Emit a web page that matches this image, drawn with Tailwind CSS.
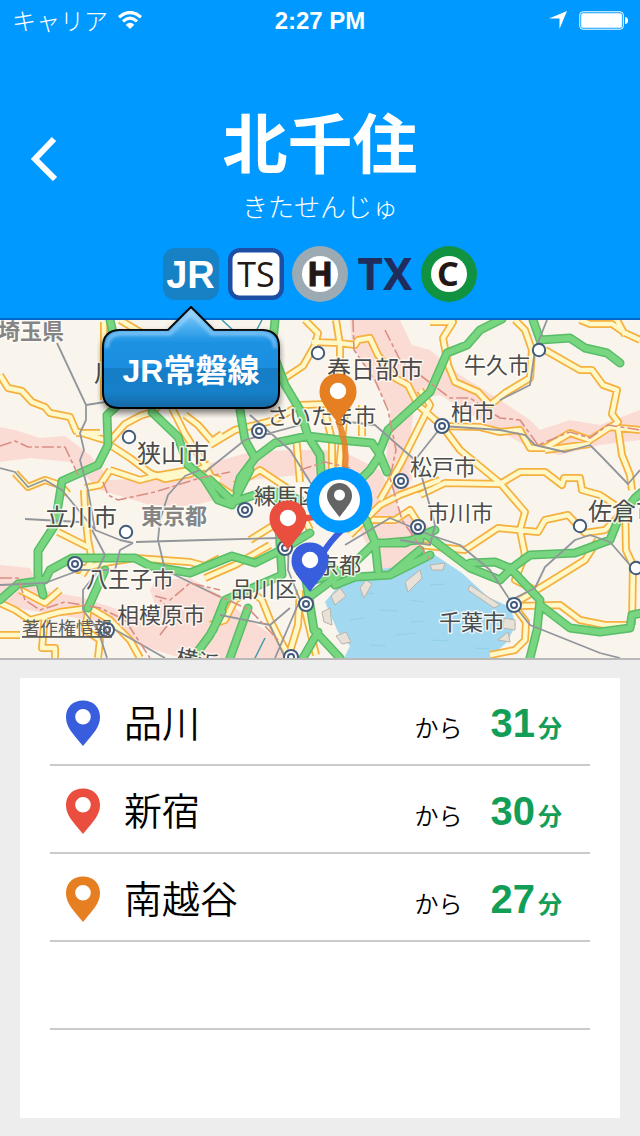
<!DOCTYPE html>
<html lang="ja">
<head>
<meta charset="utf-8">
<meta name="viewport" content="width=device-width, initial-scale=1">
<title>北千住</title>
<script src="https://cdn.jsdelivr.net/npm/@tailwindcss/browser@4"></script>
</head>
<body class="flex min-h-screen flex-col bg-[#ededed] font-['Liberation_Sans','Noto_Sans_CJK_JP',sans-serif] text-black">
<svg class="absolute size-0" aria-hidden="true">
  <defs>
    <path id="pin" fill-rule="evenodd" d="M0 0C-12-14-17-20-17-29C-17-39-10-45.500 0-45.500S17-39 17-29C17-20 12-14 0 0ZM0-37A7.800 7.800 0 1 0 0-21.400A7.800 7.800 0 1 0 0-37Z"/>
    <g id="mappin"><path fill="currentColor" d="M0 0C-12-16-18.500-21-18.500-31.500C-18.500-42-11-49.500 0-49.500S18.500-42 18.500-31.500C18.500-21 12-16 0 0Z"/><circle cy="-32" r="8.200" fill="#fff"/></g>
    <g id="town"><circle r="6.200" fill="#fff" stroke="#435b7b" stroke-width="2"/></g>
    <g id="city"><circle r="7" fill="#fff" stroke="#435b7b" stroke-width="2"/><circle r="3" fill="#fff" stroke="#435b7b" stroke-width="2"/></g>
  </defs>
</svg>

<header class="relative z-10 border-b-2 border-[#0068cc] bg-[#0099ff] text-white">
  <div class="grid h-10 grid-cols-3 items-center px-3 text-2xl">
    <div class="flex items-center gap-2.5">
      <span class="font-['Noto_Sans_CJK_JP',sans-serif] font-light">キャリア</span>
      <svg class="h-[18px] w-6" viewBox="0 0 24 18" fill="none" stroke="#fff" stroke-width="3.200"><path d="M1 6.200Q12-3.200 23 6.200M5 10.400Q12 4 19 10.400"/><path fill="#fff" stroke="none" d="M12 18L7.700 13.700Q12 10 16.300 13.700Z"/></svg>
    </div>
    <div class="pt-0.5 text-center font-bold">2:27 PM</div>
    <div class="flex items-center justify-end gap-3">
      <svg class="size-[18px]" viewBox="0 0 18 18" fill="#fff"><path d="M18 0L10.500 18V7.500H0Z"/></svg>
      <svg class="h-[19px] w-[49px]" viewBox="0 0 49 19" fill="#fff"><rect x=".8" y=".8" width="43.500" height="17.400" rx="3" fill="none" stroke="#fff"/><rect x="2.200" y="2.200" width="40.700" height="14.600" rx="1.500"/><path d="M46 6Q49 6 49 9.500T46 13Z"/></svg>
    </div>
  </div>
  <div class="relative flex flex-col items-center pt-[60px]">
    <button type="button" aria-label="戻る" class="absolute top-[93px] left-[30px]">
      <svg class="h-[48px] w-[30px]" viewBox="0 0 30 48" fill="none" stroke="#fff" stroke-width="6"><path d="M24 6L5 26L25 46" /></svg>
    </button>
    <h1 class="font-['Noto_Sans_CJK_JP',sans-serif] text-[65px] leading-[80px] font-bold">北千住</h1>
    <p class="mt-1.5 font-['Noto_Sans_CJK_JP',sans-serif] text-[26px] leading-[40px] font-light">きたせんじゅ</p>
  </div>
  <nav class="mx-auto mt-5 mb-4 flex w-[314px] items-center justify-between" aria-label="路線">
    <div class="relative">
      <button type="button" aria-label="JR常磐線" class="block">
        <svg class="h-[52px] w-14" viewBox="0 0 56 52"><rect width="56" height="52" rx="12" fill="#1781c5"/><text x="27.500" y="40" text-anchor="middle" font-family="Liberation Sans" font-weight="700" font-size="38" fill="#fff">JR</text></svg>
      </button>
      <div class="absolute top-[58px] left-1/2 h-[112px] w-[188px] -translate-x-1/2 pt-6">
        <svg class="absolute inset-0 size-full" viewBox="0 0 188 112">
          <defs>
            <linearGradient id="bubble" x2="0" y2="1"><stop offset="0" stop-color="#9bd3f8"/><stop offset=".2" stop-color="#4aaef0"/><stop offset=".36" stop-color="#1a91e2"/><stop offset=".6" stop-color="#1c8ee0"/><stop offset=".61" stop-color="#177dc6"/><stop offset=".84" stop-color="#1880ca"/><stop offset="1" stop-color="#1468a4"/></linearGradient>
            <filter id="shade" x="-10%" y="-10%" width="120%" height="130%"><feDropShadow dx="0" dy="4" stdDeviation="3" flood-opacity=".5"/></filter>
            <filter id="soft"><feGaussianBlur stdDeviation="1.500"/></filter>
          </defs>
          <path d="M22 24H71L94 1L117 24H166Q182 25 182 41V86Q182 102 166 102H22Q6 102 6 86V41Q6 25 22 24Z" fill="url(#bubble)" stroke="#000" stroke-width="2" stroke-linejoin="round" filter="url(#shade)"/>
          <path d="M10 42Q10 28 24 27.500H73L94 7L115 27.500H164Q178 28 178 42" fill="none" stroke="#b8dfff" stroke-opacity=".5" stroke-width="4" filter="url(#soft)"/>
        </svg>
        <p class="relative pt-0.5 text-center text-[32px] leading-[78px] font-bold whitespace-nowrap">JR常磐線</p>
      </div>
    </div>
    <button type="button" aria-label="東武スカイツリーライン"><svg class="h-[52px] w-14" viewBox="0 0 56 52"><rect width="56" height="52" rx="12" fill="#1c4fa4"/><rect x="4.500" y="4.500" width="47" height="43" rx="7" fill="#fff"/><text x="28" y="39" text-anchor="middle" font-family="Open Sans, Noto Sans, sans-serif" font-size="34" fill="#231815">TS</text></svg></button>
    <button type="button" aria-label="日比谷線"><svg class="size-14" viewBox="0 0 56 56"><circle cx="28" cy="28" r="28" fill="#9caab3"/><circle cx="28" cy="28" r="18" fill="#fff"/><text x="28" y="40" text-anchor="middle" font-family="Liberation Sans Narrow, Noto Sans, sans-serif" font-weight="700" font-size="34" fill="#231815" stroke="#231815">H</text></svg></button>
    <button type="button" aria-label="つくばエクスプレス"><svg class="size-14 overflow-visible" viewBox="0 0 56 56"><text x="28" y="44" text-anchor="middle" font-family="Noto Sans, Open Sans, sans-serif" font-weight="700" font-size="44" fill="#1f2c5c">TX</text></svg></button>
    <button type="button" aria-label="千代田線"><svg class="size-14" viewBox="0 0 56 56"><circle cx="28" cy="28" r="28" fill="#109241"/><circle cx="28" cy="28" r="18" fill="#fff"/><text x="27" y="40" text-anchor="middle" font-family="Noto Sans, Open Sans, sans-serif" font-weight="700" font-size="34" fill="#231815">C</text></svg></button>
  </nav>
</header>

<main class="flex flex-1 flex-col">
<section aria-label="地図" class="border-b-2 border-[#b9b9b9]">
<svg class="block h-auto w-full" viewBox="0 320 640 338" stroke-linejoin="round">
  <rect y="320" width="640" height="338" fill="#f9f5ed"/>
  <g fill="#fbdcd5">
    <path d="M0 427L15 430L40 438L65 436L90 455L110 480L150 478L190 468L215 462L250 452L290 450L340 450L380 470L400 510L435 530L410 570L385 575L370 550L340 495L300 475L250 480L215 500L190 506L150 505L100 490L70 462L30 458L0 462Z"/>
    <path d="M350 320H400L412 345L430 350L460 375L500 400L530 420L540 430L570 420L600 425L640 410V440L600 445L560 455L530 448L480 420L440 395L415 400L410 440L412 480L400 500L385 475L390 410L370 375L352 345Z"/>
    <path d="M0 565L30 568L40 590L80 597L120 610L160 620L150 590L155 580L190 578L220 595L250 620L280 640L300 658H180L140 645L120 625L40 612L0 605Z"/>
  </g>
  <path d="M325 602L335 590L352 578L380 569L408 566L432 553L462 573L488 597L510 607L516 625L507 642L490 658H344L350 646L338 632Z" fill="#a2d9f1"/>
  <g fill="none" stroke="#92cfe9" stroke-width="1"><path d="M360 595l14-2M380 610l18 1M350 620l15-2M410 600l14 2M430 585l15-1M445 610l14 1M395 635l20-2M430 640l18 1M460 630l14-2M370 645l16 1M410 622l14-1M475 648l14 1M405 586l12-1"/></g>
  <g fill="#e7e1d8" stroke="#b9b4ab" stroke-width="1"><path d="M331 596L340 588L346 596L335 605ZM322 612L330 608L332 625L324 622ZM336 636L346 632L351 642L342 644ZM405 582L420 570L422 578L408 592ZM360 588L366 580L372 584L364 598ZM430 565L445 563L443 570L432 570ZM470 585L500 605L494 608L468 590ZM504 618L515 620V630L503 628ZM498 640L508 632L510 642Z"/></g>
  <!-- 一般道: 縁取りと塗りで同じ線を使う -->
  <defs>
    <path id="roads" d="M0 375L8 388L22 391L32 402L45 407L50 413L70 417L76 431L98 438L110 441L125 424L140 416L152 412L165 400M76 433H100M110 445L130 458L150 473L165 479L190 474L210 464M104 322V400M120 320L150 338M172 408L185 434L203 462L214 482M185 415L198 425L212 441L222 434M305 320L318 333L315 345L303 366L285 378L225 352M312 342L340 343L355 345L358 340L370 338L378 355L395 378L408 385L418 405L442 426L460 450L500 483L525 512L520 530L525 555L515 580L535 590M336 320L340 345V375L345 410L338 480M210 445L235 430L275 420L300 405L330 404L350 412M296 436L300 482M324 408L332 440V480M362 405V436M430 322H453L443 338L448 365L455 382L478 392L490 405L505 393L530 378L532 350L525 330L515 320M545 350L580 370H592L603 385L617 390L612 414L618 422L610 428M580 320L590 324H612L625 333L640 340M617 320L625 335M442 426L480 427L500 432L520 430L530 448H545L570 433L590 440L610 427L640 430M545 450L590 444M420 495L445 483L500 484L520 472H545L562 485L564 478H580L582 490L600 495L615 505M618 428L622 455L630 475L632 490M15 473L28 487L45 480L60 485L68 494M84 490L85 510L88 540L92 560L82 575M58 532L90 548M85 488L100 485L110 470M75 570L110 562L135 558L190 562L205 566L220 558M0 603L15 610L30 620L60 612L90 608L110 620L130 640L140 658M0 635H20M45 615L42 648H55V658M88 612L85 630L100 640L98 658M20 590L45 603L60 590M110 470L140 480L155 476L190 470L220 480M210 625L225 620L235 600L250 590L262 600L270 620L280 640L290 658M300 590L298 625L288 658M303 602L316 655M350 535L380 505L400 495L440 480M372 520H395L410 510L420 526M205 578L235 565L270 545M235 485L260 470L290 490L310 530M250 540L290 515M420 545L465 550L498 528L538 532L545 520L568 515L585 533L605 530L620 515M520 606L560 605L580 620L605 625H630M520 600L548 583L585 560L598 540M625 500L626 550L633 565L632 625M514 606L526 622L525 640L515 650L490 655M240 500L210 480M420 390L430 405L400 465L380 500"/>
  </defs>
  <use href="#roads" fill="none" stroke="#f5b03f" stroke-width="8"/>
  <use href="#roads" fill="none" stroke="#fff8c8" stroke-width="4.500"/>
  <!-- 高速道路 -->
  <defs><path id="highways" d="M110 320L117 350L118 405L107 415L108 445L98 465L62 481L55 525L38 551L38 575L43 595M152 412L178 437L188 465L204 478L218 500L232 505L250 470M275 320L272 350L285 385L300 410L308 436M240 410L245 440L255 458L240 478L237 490M255 458L275 443L308 436L340 440L372 443L380 455L370 470L355 485M308 436L320 455L322 490M380 450L388 430L410 410L430 392L447 353L467 345L480 330L502 319M380 455L387 472M533 320L540 340L570 338L585 348L607 353L620 363M0 600L18 584L45 580L50 570L72 558H135L150 566L190 573L232 556L255 563L285 548L310 533M105 570L88 608M222 612L210 635L193 658M278 495L280 545L282 575L225 600L213 630M248 608L230 658M306 580L314 630L340 658M303 658L318 632M312 595L350 567L375 543L405 543L435 530M312 560L340 572L315 580M366 520L375 542L378 570M335 585L355 577L390 575L430 555M385 543L420 540M420 530L450 553L470 568L500 580L512 568L530 555L575 553L610 540L618 520L635 498L642 492M470 563L495 562L510 568L540 600L537 630L530 658M540 605L570 628L600 632L630 628L632 615L642 613M210 480L233 502L270 490L300 500M390 575L420 550"/></defs>
  <use href="#highways" fill="none" stroke="#59bd68" stroke-width="9" stroke-linecap="round"/>
  <use href="#highways" fill="none" stroke="#77d67f" stroke-width="6" stroke-linecap="round"/>
  <g fill="none" stroke="#92969b" stroke-width="1.800">
    <path d="M57 343L86 405V420L80 433L84 450L80 460L88 490L95 530M86 405L105 402M0 468L15 472L28 487L45 480L62 490L80 512L95 530L120 540L133 543M25 519L80 522M136 542L205 540L280 538M200 470L185 476L168 495L160 520L158 540L165 570L220 597M133 543L120 550L115 570L80 570L45 583L0 585M92 530L105 555L95 575L83 590V610L98 630L107 658M98 620L165 658M205 472L245 440L300 425M250 415L290 450L312 485M340 421L375 425L400 447L415 460L442 426L500 430L525 435L535 445L565 452L590 445L600 455L628 484L640 470M547 320L535 350L530 385L500 400M345 545L390 518L430 535L460 545L490 570L510 600L530 625L560 637L600 653L620 658M515 598L535 588L545 567L575 540L590 535L610 542L630 565M420 470L435 525L430 545L400 540M290 500L288 570L300 600L275 658M270 625L290 608M220 615L270 625L285 658"/>
  </g>
  <path d="M0 446L15 441L28 447H65L78 475M103 482L108 495L118 500L155 492L200 478L230 472M353 320L354 350L375 380L388 410L396 450L390 478L402 520L430 560M385 330L400 360L412 370M420 375L450 398H470L500 418L520 420L538 445L570 432L590 438L608 425L640 430M0 578H18L25 600L40 610L65 602L100 608L125 620L150 658M155 596L170 600L190 583L220 590M160 635L175 615L160 600M210 592L250 610L278 640M300 470L325 462L350 468" fill="none" stroke="#d98e84" stroke-width="1.600" stroke-dasharray="12 3 4 3"/>
  <g fill="none" stroke="#3c9caf" stroke-width="1.500"><path d="M255 658L265 638M222 320L235 332M262 320L255 333"/></g>

  <g>
    <use href="#town" x="318" y="353"/><use href="#town" x="539" y="350"/><use href="#town" x="129" y="437"/><use href="#town" x="126" y="532"/><use href="#town" x="580" y="526"/><use href="#town" x="636" y="568"/>
    <use href="#city" x="259" y="431"/><use href="#city" x="442" y="426"/><use href="#city" x="401" y="481"/><use href="#city" x="245" y="510"/><use href="#city" x="418" y="527"/><use href="#city" x="75" y="564"/><use href="#city" x="285" y="548"/><use href="#city" x="306" y="604"/><use href="#city" x="514" y="605"/><use href="#city" x="107" y="630"/><use href="#city" x="291" y="657"/>
  </g>
  <g font-family="Noto Sans CJK JP, sans-serif" font-size="22" fill="#4b4b4b" stroke="#fffdf8" stroke-width="3" stroke-opacity=".8" paint-order="stroke">
    <g font-size="24"><text x="94" y="382">川</text><text x="327" y="378">春日部市</text><text x="137" y="462">狭山市</text><text x="45" y="526">立川市</text><text x="588" y="520">佐倉市</text></g>
    <text x="464" y="373">牛久市</text>
    <text x="451" y="420">柏市</text><text x="267" y="424">さいたま市</text>
    <text x="410" y="475">松戸市</text>
    <text x="254" y="504">練馬区</text>
    <text x="427" y="521">市川市</text>
    <text x="295" y="573">東京都</text><text x="86" y="587">八王子市</text>
    <text x="231" y="597">品川区</text><text x="117" y="623">相模原市</text>
    <text x="439" y="630">千葉市</text>
    <text x="174" y="664" transform="rotate(12 174 664)">横浜</text>
    <g font-weight="700" fill="#858585"><text x="-2" y="339">埼玉県</text><text x="141" y="524">東京都</text></g>
  </g>
  <a href="#legal"><text x="22" y="635" font-family="Noto Sans CJK JP, sans-serif" font-size="18" fill="#5d5d5d" text-decoration="underline">著作権情報</text></a>

  <g fill="none" stroke-width="6"><path d="M338 420Q348 445 345 470" stroke="#e67e22" stroke-opacity=".85"/><path d="M288 528Q300 516 320 517" stroke="#e94e3f"/><path d="M310 582Q320 550 342 530" stroke="#385ddd"/></g>
  <use href="#mappin" x="338" y="423" color="#e67e22"/>
  <use href="#mappin" x="288" y="550" color="#e94e3f"/>
  <circle cx="339.500" cy="500" r="33" fill="#0099ff"/><circle cx="339.500" cy="500" r="20.500" fill="#fff"/>
  <path fill="#646464" d="M339.500 517C331 506 327 502 327 495.500A12.500 12.500 0 0 1 352 495.500C352 502 348 506 339.500 517Z"/><circle cx="339.500" cy="495" r="5.500" fill="#fff"/>
  <use href="#mappin" x="310" y="592" color="#385ddd"/>
</svg>
</section>

<section aria-label="所要時間" class="mx-5 my-[18px] flex-1 bg-white px-[30px]">
  <ul>
    <li class="flex h-[88px] items-center border-b-2 border-[#cacaca] pt-1 pr-7 pl-4">
      <svg class="h-[46px] w-[34px] shrink-0 text-[#385ddd]" viewBox="-17 -46 34 46" fill="currentColor"><use href="#pin"/></svg>
      <div class="ml-6 flex flex-1 items-baseline">
        <span class="flex-1 text-[38px] leading-[56px] font-[350]">品川</span>
        <span class="mr-7 text-2xl font-[350]">から</span>
        <span class="flex items-baseline gap-[3px] text-[40px] font-bold text-[#129e57]">31<span class="text-2xl">分</span></span>
      </div>
    </li>
    <li class="flex h-[88px] items-center border-b-2 border-[#cacaca] pt-1 pr-7 pl-4">
      <svg class="h-[46px] w-[34px] shrink-0 text-[#e94e3f]" viewBox="-17 -46 34 46" fill="currentColor"><use href="#pin"/></svg>
      <div class="ml-6 flex flex-1 items-baseline">
        <span class="flex-1 text-[38px] leading-[56px] font-[350]">新宿</span>
        <span class="mr-7 text-2xl font-[350]">から</span>
        <span class="flex items-baseline gap-[3px] text-[40px] font-bold text-[#129e57]">30<span class="text-2xl">分</span></span>
      </div>
    </li>
    <li class="flex h-[88px] items-center border-b-2 border-[#cacaca] pt-1 pr-7 pl-4">
      <svg class="h-[46px] w-[34px] shrink-0 text-[#e67e22]" viewBox="-17 -46 34 46" fill="currentColor"><use href="#pin"/></svg>
      <div class="ml-6 flex flex-1 items-baseline">
        <span class="flex-1 text-[38px] leading-[56px] font-[350]">南越谷</span>
        <span class="mr-7 text-2xl font-[350]">から</span>
        <span class="flex items-baseline gap-[3px] text-[40px] font-bold text-[#129e57]">27<span class="text-2xl">分</span></span>
      </div>
    </li>
    <li class="h-[88px] border-b-2 border-[#cacaca]"></li>
    <li class="h-[88px]"></li>
  </ul>
</section>
</main>
</body>
</html>
